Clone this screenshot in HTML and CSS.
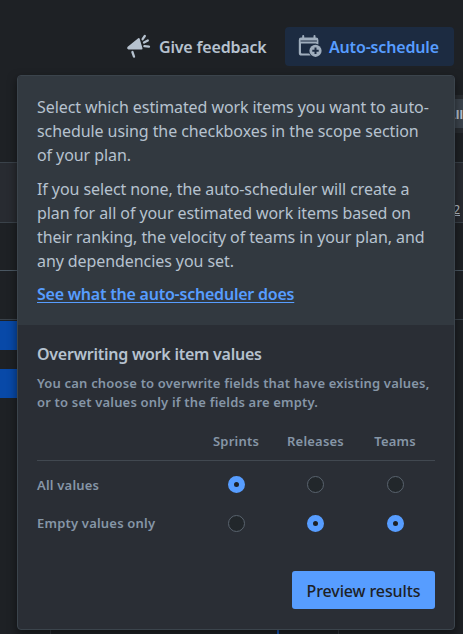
FILE: index.html
```html
<!DOCTYPE html>
<html lang="en">
<head>
    <meta charset="UTF-8">
    <meta name="viewport" content="width=device-width, initial-scale=1.0">
    <title>Auto-schedule</title>
    <link rel="stylesheet" href="styles.css">
</head>
<body>
    <div class="page">
        <header class="toolbar">
            <button class="tool feedback">
                <svg width="26" height="26" viewBox="0 0 26 26">
                    <path class="fill" d="M1.4 13 12.2 4.2q1-.7 1.4.4l2.9 9.6q.2 1.2-1 1.2L2.4 15.6q-2-.9-1-2.6z"/>
                    <path class="line" d="M6.4 18l1.6 4.6M16.6 5.2l2.2-3.2M18 8.5l3.8-2M18.4 12.2l4.6.5"/>
                </svg>
                <span>Give feedback</span>
            </button>
            <button class="tool schedule">
                <svg width="26" height="26" viewBox="0 0 26 26">
                    <path class="fill" d="M3 3.5h15q2.4 0 2.4 2.4v4.6h-2V9.4H3v9.2q0 1 1 1h9v2H3.4Q.8 21.6.8 19V5.9Q.8 3.5 3 3.5z"/>
                    <path class="line" d="M5.2 2v3M16.5 2v3"/>
                    <path class="gap" d="M2.5 7h16.4"/>
                    <circle class="ring" cx="17.5" cy="16.8" r="6.9"/>
                    <circle class="fill" cx="17.5" cy="16.8" r="6.1"/>
                    <path class="plus" d="M17.5 13.6v6.4M14.3 16.8h6.4"/>
                </svg>
                <span>Auto-schedule</span>
            </button>
        </header>

        <!-- timeline behind the dialog -->
        <main class="timeline">
            <div class="row filters"><div class="tag-box"><span class="tag">LII</span></div></div>
            <div class="row months"><span class="count">2</span></div>
            <div class="row sprints"></div>
            <div class="row releases"></div>
            <div class="bars">
                <div class="bar"></div>
                <div class="bar"></div>
            </div>
            <div class="grid"><span class="today"></span></div>
        </main>

        <section class="dialog">
            <div class="intro">
                <p>Select which estimated work items you want to auto-<br>schedule using the checkboxes in the scope section<br>of your plan.</p>
                <p>If you select none, the auto-scheduler will create a<br>plan for all of your estimated work items based on<br>their ranking, the velocity of teams in your plan, and<br>any dependencies you set.</p>
                <a class="link" href="#">See what the auto-scheduler does</a>
            </div>
            <div class="options">
                <h2>Overwriting work item values</h2>
                <p class="hint">You can choose to overwrite fields that have existing values,<br>or to set values only if the fields are empty.</p>
                <div class="choices">
                    <div class="line-row head">
                        <span></span><span>Sprints</span><span>Releases</span><span>Teams</span>
                    </div>
                    <div class="line-row">
                        <span class="name">All values</span>
                        <i class="radio on"></i><i class="radio"></i><i class="radio"></i>
                    </div>
                    <div class="line-row">
                        <span class="name">Empty values only</span>
                        <i class="radio"></i><i class="radio on"></i><i class="radio on"></i>
                    </div>
                </div>
                <button class="preview">Preview results</button>
            </div>
        </section>
    </div>
</body>
</html>
```

FILE: styles.css
```css
* {
    box-sizing: border-box;
}

body {
    margin: 0;
    background: #1e2125;
    color: #b6c2cf;
    font-family: "Noto Sans", "Open Sans", sans-serif;
    font-size: 16px;
}

button {
    border: none;
    font-family: inherit;
}

.page {
    position: relative;
    height: 634px;
    overflow: hidden;
}

/* toolbar */
.toolbar {
    display: flex;
    justify-content: flex-end;
    height: 95px;
    padding: 27px 9px 0 0;
}

.tool {
    display: flex;
    align-items: center;
    height: 39px;
    padding: 0;
    border-radius: 4px;
    background: none;
    color: #b6c2cf;
    font-size: 16px;
    font-weight: 600;
    white-space: nowrap;
}

.feedback {
    width: 159px;
    gap: 7px;
    letter-spacing: -0.18px;
}

.schedule {
    width: 169px;
    padding-left: 13px;
    gap: 5px;
    background: #1c2b41;
    color: #579dff;
    letter-spacing: -0.17px;
}

.tool svg {
    flex: none;
}

.fill {
    fill: #b6c2cf;
}

.line,
.plus,
.gap {
    fill: none;
    stroke: #b6c2cf;
    stroke-width: 2;
    stroke-linecap: round;
}

.feedback .line {
    stroke-width: 2.3;
}

.schedule .fill {
    fill: #9fadbc;
}

.schedule .line {
    stroke: #9fadbc;
}

.schedule .gap {
    stroke: #1c2b41;
    stroke-width: 1;
    stroke-linecap: butt;
}

.ring {
    fill: #1c2b41;
}

.schedule .plus {
    stroke: #1c2b41;
    stroke-linecap: butt;
}

/* timeline */
.row {
    display: flex;
    justify-content: flex-end;
    border-bottom: 1px solid #3a424a;
}

.filters {
    height: 68px;
}

.tag-box {
    height: 38px;
    padding: 4px 0 5px;
    background: #282c31;
}

.tag {
    display: block;
    height: 29px;
    padding-left: 8px;
    background: #3b434c;
    font-family: "Liberation Sans", sans-serif;
    font-size: 13px;
    font-weight: bold;
    line-height: 31px;
}

.months {
    height: 60px;
    padding: 38px 3px 0 0;
    background: #282b31;
}

.count {
    height: 15px;
    border-bottom: 1px solid #9fadbc;
    font-size: 12px;
    line-height: 17px;
}

.sprints {
    height: 48px;
    border-color: #4a5762;
}

.releases {
    height: 49px;
}

.bars {
    display: flex;
    flex-direction: column;
    gap: 19px;
    padding-top: 1px;
}

.bar {
    width: 30px;
    height: 29px;
    background: #0849a8;
}

.grid {
    display: flex;
    height: 236px;
    width: 289px;
    margin-left: 50px;
    border: solid #33383e;
    border-width: 0 1px;
}

.today {
    width: 2px;
    margin-left: 226px;
    background: #1558bc;
}

/* dialog */
.dialog {
    position: absolute;
    top: 75px;
    left: 17px;
    width: 438px;
    height: 555px;
    overflow: hidden;
    border: 1px solid #3b444c;
    border-radius: 4px;
    background: #2a2e35;
    box-shadow: 0 4px 10px rgba(3, 4, 4, 0.5);
}

.intro {
    height: 249px;
    padding: 19px 0 0 19px;
    background: #323940;
    line-height: 24px;
    letter-spacing: -0.08px;
    white-space: nowrap;
}

.intro p {
    margin: 0 0 10px;
}

.intro p + p {
    margin-bottom: 9px;
}

.link {
    display: block;
    width: max-content;
    color: #579dff;
    font-weight: 600;
    letter-spacing: -0.22px;
    text-underline-offset: 2px;
    text-decoration-thickness: 1px;
}

.options {
    padding: 17px 19px 0;
}

.options h2 {
    margin: 0;
    font-size: 16px;
    font-weight: 600;
    line-height: 24px;
    letter-spacing: -0.24px;
}

.hint {
    margin: 8px 0 0;
    color: #8696a7;
    font-size: 13px;
    font-weight: 600;
    line-height: 19px;
    letter-spacing: 0.18px;
    white-space: nowrap;
}

.choices {
    margin-top: 20px;
    color: #8696a7;
    font-size: 13px;
    font-weight: 600;
    letter-spacing: 0.2px;
}

.line-row {
    display: grid;
    grid-template-columns: 159px 80px 79px 80px;
    align-items: center;
    justify-items: center;
    height: 38px;
}

.head {
    height: 29px;
    margin-bottom: 5px;
    padding-bottom: 10px;
    border-bottom: 1px solid #414850;
    line-height: 18px;
}

.head + .line-row {
    margin-top: -1px;
    height: 39px;
}

.name {
    justify-self: start;
}

.radio {
    width: 17px;
    height: 17px;
    border: 1px solid #59636e;
    border-radius: 50%;
    background: #22272b;
}

.radio.on {
    border: 6px solid #579dff;
    background: #1d2125;
}

.preview {
    display: block;
    width: 143px;
    height: 38px;
    margin: 29px 0 0 auto;
    padding: 2px 0 0;
    border-radius: 3px;
    background: #579dff;
    color: #1d2125;
    font-size: 16px;
    font-weight: 500;
    letter-spacing: -0.1px;
}
```
